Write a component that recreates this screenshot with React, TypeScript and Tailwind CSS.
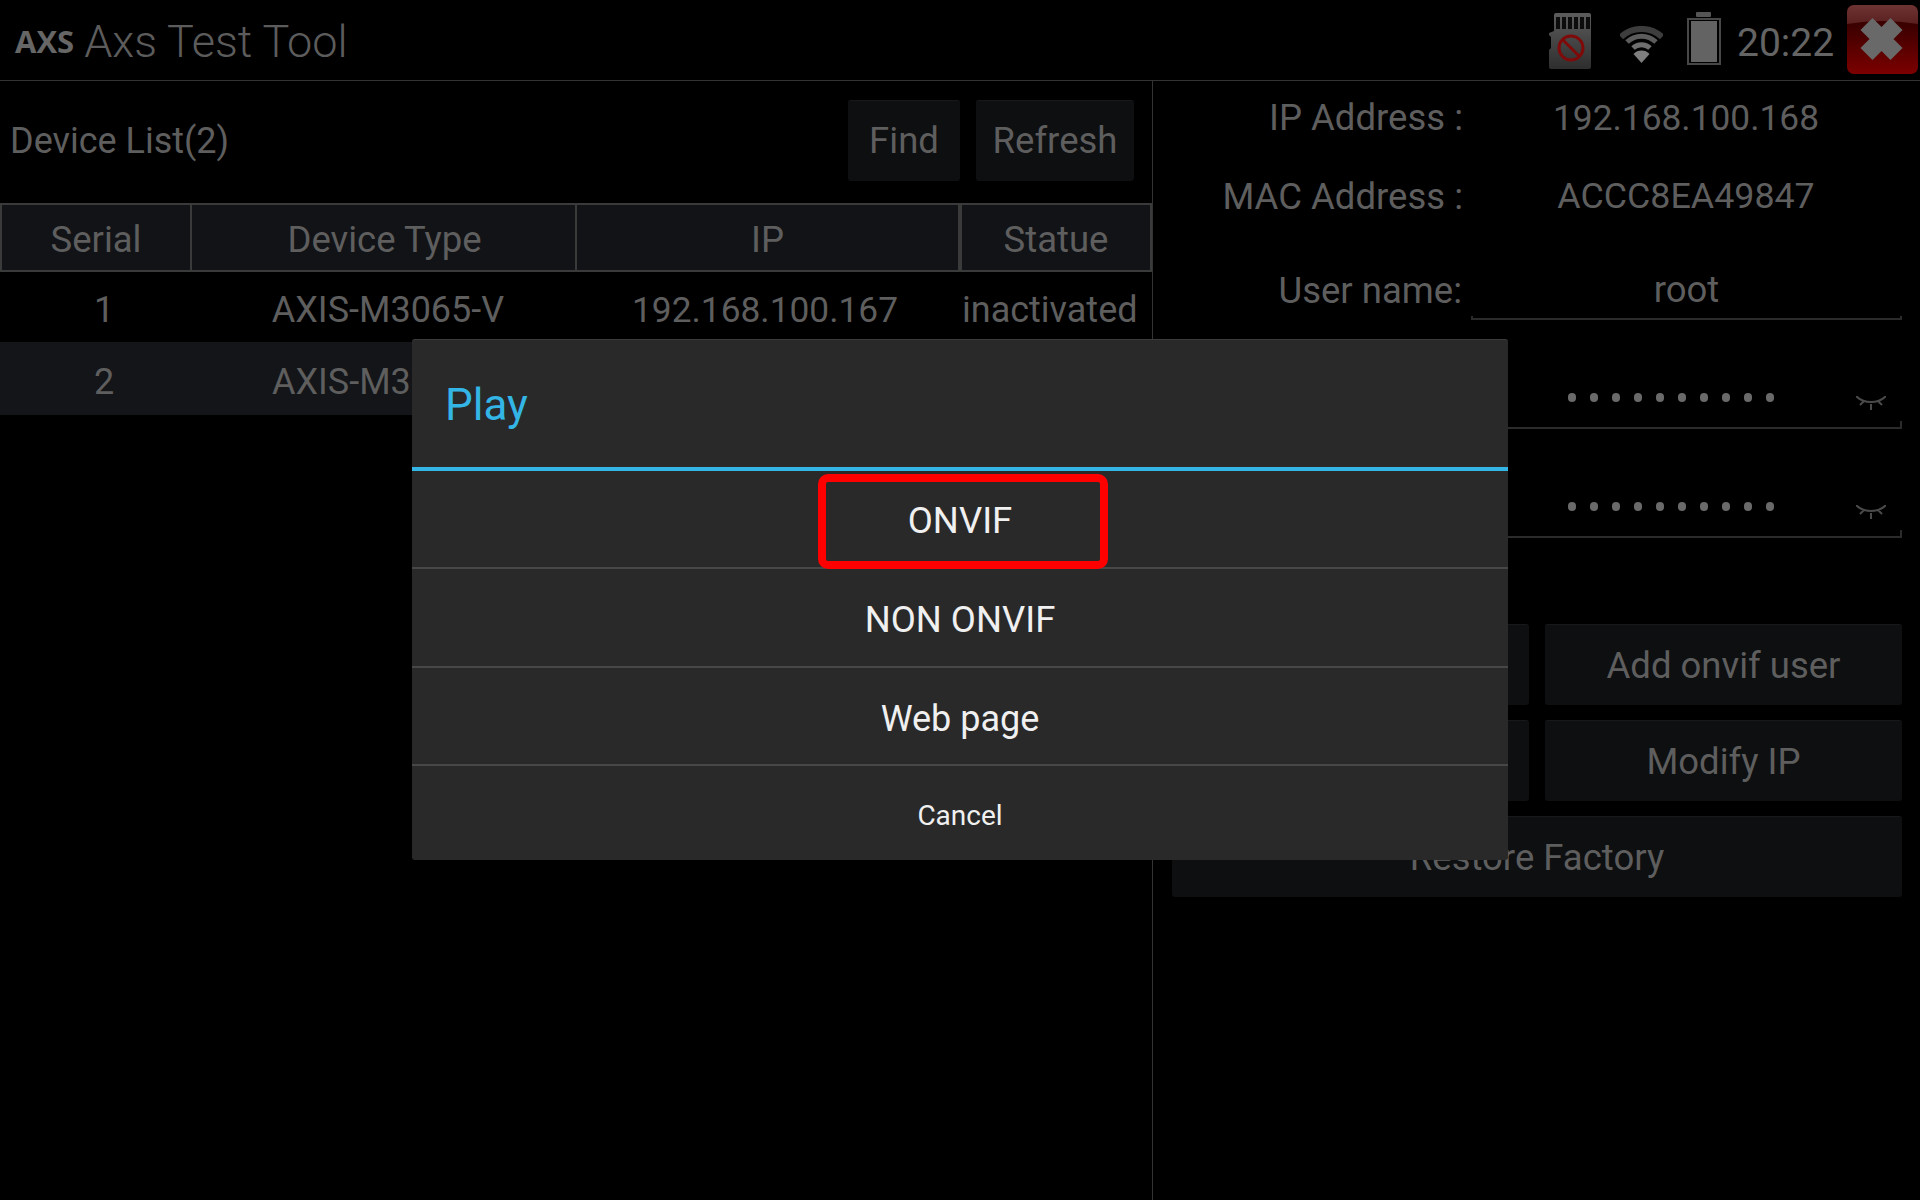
import React from "react";

const dim = "text-[#5e5e5e]";

function SdIcon() {
  return (
    <svg width="42" height="56" viewBox="0 0 42 56" className="mt-[13px] shrink-0">
      <defs>
        <linearGradient id="sdg" x1="0" y1="0" x2="0" y2="1">
          <stop offset="0" stopColor="#5c5c5c" />
          <stop offset="1" stopColor="#2e2e2e" />
        </linearGradient>
      </defs>
      <path d="M7 0H40a2 2 0 0 1 2 2V54a2 2 0 0 1-2 2H2a2 2 0 0 1-2-2V37L2 35V24L0 22V20L5 18V2a2 2 0 0 1 2-2Z" fill="url(#sdg)" />
      {[7, 13, 19, 25, 31, 37].map((x) => (
        <rect key={x} x={x} y="4" width="4" height="12" fill="#0c0c0c" />
      ))}
      <circle cx="22" cy="35" r="12" fill="none" stroke="#7e0a0a" strokeWidth="3" />
      <line x1="14" y1="27" x2="30" y2="43" stroke="#7e0a0a" strokeWidth="3" />
    </svg>
  );
}

function WifiIcon() {
  return (
    <svg width="43" height="37" viewBox="0 0 43 37" className="ml-[29px] mt-[26px] shrink-0">
      <path d="M1 11 A30 30 0 0 1 42 11" fill="none" stroke="#3d3d3d" strokeWidth="6" />
      <path d="M7 16 A21 21 0 0 1 36 16" fill="none" stroke="#5c5c5c" strokeWidth="5" />
      <path d="M13 22 A12.5 12.5 0 0 1 30 22" fill="none" stroke="#6e6e6e" strokeWidth="5" />
      <path d="M21.5 37 L13.5 28 A11 11 0 0 1 29.5 28 Z" fill="#7e7e7e" />
    </svg>
  );
}

function BatteryIcon() {
  return (
    <svg width="34" height="53" viewBox="0 0 34 53" className="ml-[24px] mt-[12px] shrink-0">
      <rect x="9" y="0" width="15" height="5" rx="1" fill="#555555" />
      <rect x="1" y="7" width="32" height="45" fill="none" stroke="#484848" strokeWidth="2" />
      <rect x="4" y="9" width="26" height="41" fill="#636363" />
    </svg>
  );
}

function CloseIcon() {
  return (
    <svg width="71" height="69" viewBox="0 0 71 69" className="ml-[14px] mr-[2px] mt-[5px] shrink-0">
      <defs>
        <linearGradient id="closeg" x1="0" y1="0" x2="0" y2="1">
          <stop offset="0" stopColor="#3a0000" />
          <stop offset="0.3" stopColor="#3c0000" />
          <stop offset="1" stopColor="#7c0000" />
        </linearGradient>
        <linearGradient id="closet" x1="0" y1="0" x2="0" y2="1">
          <stop offset="0" stopColor="#6e3434" />
          <stop offset="1" stopColor="#5a1f1f" />
        </linearGradient>
      </defs>
      <rect width="71" height="69" rx="7" fill="url(#closeg)" />
      <path d="M0 19V7a7 7 0 0 1 7-7H64a7 7 0 0 1 7 7V19Q35 13 0 19Z" fill="url(#closet)" />
      <path d="M19.5 19 L49.5 49 M49.5 19 L19.5 49" stroke="#696969" strokeWidth="17" />
    </svg>
  );
}

function Eye() {
  return (
    <svg width="30" height="14" viewBox="0 0 30 14" className="ml-auto mr-[16px] mt-[5px] shrink-0">
      <path d="M0 0 C8 8 22 8 30 0 M4 9 L8 5 M15 14 V8 M26 9 L22 5" fill="none" stroke="#4a4a4a" strokeWidth="2" />
    </svg>
  );
}

function DarkButton({ className, children }: { className: string; children?: React.ReactNode }) {
  return (
    <div className={`flex items-center justify-center rounded-[3px] border-t border-[#17181a] bg-[#0e0f11] pt-[2px] ${dim} ${className}`}>
      {children}
    </div>
  );
}

function PasswordField() {
  return (
    <div className="ml-[318px] flex h-[109px] w-[431px] flex-col justify-end">
      <div className="flex h-[30px] items-start pl-[97px]">
        <div className="mt-[2px] flex gap-[14px]">
          {Array.from({ length: 10 }).map((_, i) => (
            <span key={i} className="h-[9px] w-[8px] rounded-full bg-[#6a6a6a]" />
          ))}
        </div>
        <Eye />
      </div>
      <div className="h-[8px] border-x-2 border-b-2 border-[#2b2b2b]" />
    </div>
  );
}

function DialogItem({ label, className }: { label: string; className: string }) {
  return (
    <div className={`flex items-center justify-center text-[#f0f0f0] ${className}`}>
      {label}
    </div>
  );
}

export default function App() {
  return (
    <div className="relative h-[1200px] w-[1920px] overflow-hidden bg-black [font-family:Roboto,sans-serif]">
      <header className="flex h-[81px] items-start border-b border-[#333333]">
        <span className="ml-[15px] mt-[21px] text-[31px] font-bold leading-[40px] text-[#666666] [font-family:'Open_Sans',sans-serif]">AXS</span>
        <span className="ml-[10px] mt-[16px] text-[45px] font-light leading-[52px] text-[#5c5c5c]">Axs Test Tool</span>
        <div className="ml-auto flex h-full items-start">
          <SdIcon />
          <WifiIcon />
          <BatteryIcon />
          <span className="ml-[16px] mt-[20px] w-[96px] whitespace-nowrap text-[39px] leading-[46px] text-[#646464]">20:22</span>
          <CloseIcon />
        </div>
      </header>

      <div className="flex h-[1119px]">
        <section className={`w-[1153px] shrink-0 border-r border-[#333333] text-[36px] ${dim}`}>
          <div className="flex h-[122px] items-center justify-between pb-[4px] pl-[10px] pr-[18px]">
            <span className="mt-[2px]">Device List(2)</span>
            <div className="flex gap-[16px] text-[36.5px]">
              <DarkButton className="h-[81px] w-[112px]">Find</DarkButton>
              <DarkButton className="h-[81px] w-[158px]">Refresh</DarkButton>
            </div>
          </div>

          <div className="flex h-[69px] w-[1152px] border-y-2 border-[#3a3a3a] bg-[#121317] text-[36.5px]">
            <div className="flex w-[192px] items-center justify-center border-x-2 border-[#3a3a3a] pt-[6px]">Serial</div>
            <div className="flex w-[385px] items-center justify-center border-r-2 border-[#3a3a3a] pl-[2px] pt-[6px]">Device Type</div>
            <div className="flex w-[383px] items-center justify-center border-r-2 border-[#3a3a3a] pt-[6px]">IP</div>
            <div className="flex w-[192px] items-center justify-center border-x-2 border-[#3a3a3a] pt-[6px]">Statue</div>
          </div>

          <div className="grid h-[70px] grid-cols-[208px_360px_394px_174px] items-center pt-[6px] text-center">
            <span>1</span>
            <span>AXIS-M3065-V</span>
            <span className="text-[35.3px]">192.168.100.167</span>
            <span className="whitespace-nowrap pr-[2px]">inactivated</span>
          </div>
          <div className="grid h-[73px] grid-cols-[208px_360px_394px_174px] items-center bg-[#141518] pt-[6px] text-center">
            <span>2</span>
            <span className="whitespace-nowrap pl-[64px] text-left">AXIS-M3</span>
          </div>
        </section>

        <section className={`flex-1 text-[36.5px] ${dim}`}>
          <div className="flex h-[73px] items-center pt-[2px]">
            <span className="w-[310px] whitespace-nowrap text-right">IP Address :</span>
            <span className="w-[446px] text-center text-[35.3px]">192.168.100.168</span>
          </div>
          <div className="flex h-[84px] items-center pt-[2px]">
            <span className="w-[310px] whitespace-nowrap text-right">MAC Address :</span>
            <span className="w-[446px] text-center text-[35.8px]">ACCC8EA49847</span>
          </div>
          <div className="flex h-[24px]" />
          <div className="flex h-[58px] items-start">
            <span className="mt-[2px] w-[309px] whitespace-nowrap text-right">User name:</span>
            <div className="ml-[9px] flex h-full w-[431px] flex-col justify-end">
              <div className="flex-1 pt-[2px] text-center leading-[52px]">root</div>
              <div className="h-[8px] border-x-2 border-b-2 border-[#2b2b2b]" />
            </div>
          </div>
          <PasswordField />
          <PasswordField />
          <div className="ml-[19px] mr-[18px] mt-[86px] grid grid-cols-2 gap-x-[16px] gap-y-[15px]">
            <DarkButton className="h-[81px]" />
            <DarkButton className="h-[81px]">Add onvif user</DarkButton>
            <DarkButton className="h-[81px]" />
            <DarkButton className="h-[81px]">Modify IP</DarkButton>
            <DarkButton className="col-span-2 h-[81px]">Restore Factory</DarkButton>
          </div>
        </section>
      </div>

      <div className="absolute left-[412px] top-[339px] flex h-[521px] w-[1096px] flex-col rounded-[3px] border-t border-[#3c3c3c] bg-[#292929]">
        <div className="flex h-[127px] items-center pl-[33px] pt-[3px] text-[44px] text-[#33b5e5]">Play</div>
        <div className="h-[4px] bg-[#33b5e5]" />
        <DialogItem label="ONVIF" className="h-[96px] pt-[5px] text-[36.5px]" />
        <div className="h-[2px] bg-[#474747]" />
        <DialogItem label="NON ONVIF" className="h-[97px] pt-[6px] text-[36.5px]" />
        <div className="h-[2px] bg-[#474747]" />
        <DialogItem label="Web page" className="h-[96px] pt-[6px] text-[36px]" />
        <div className="h-[2px] bg-[#474747]" />
        <DialogItem label="Cancel" className="flex-1 pt-[6px] text-[28px]" />
        <div className="absolute left-[406px] top-[134px] h-[95px] w-[290px] rounded-[10px] border-[8px] border-[#ff0000]" />
      </div>
    </div>
  );
}
